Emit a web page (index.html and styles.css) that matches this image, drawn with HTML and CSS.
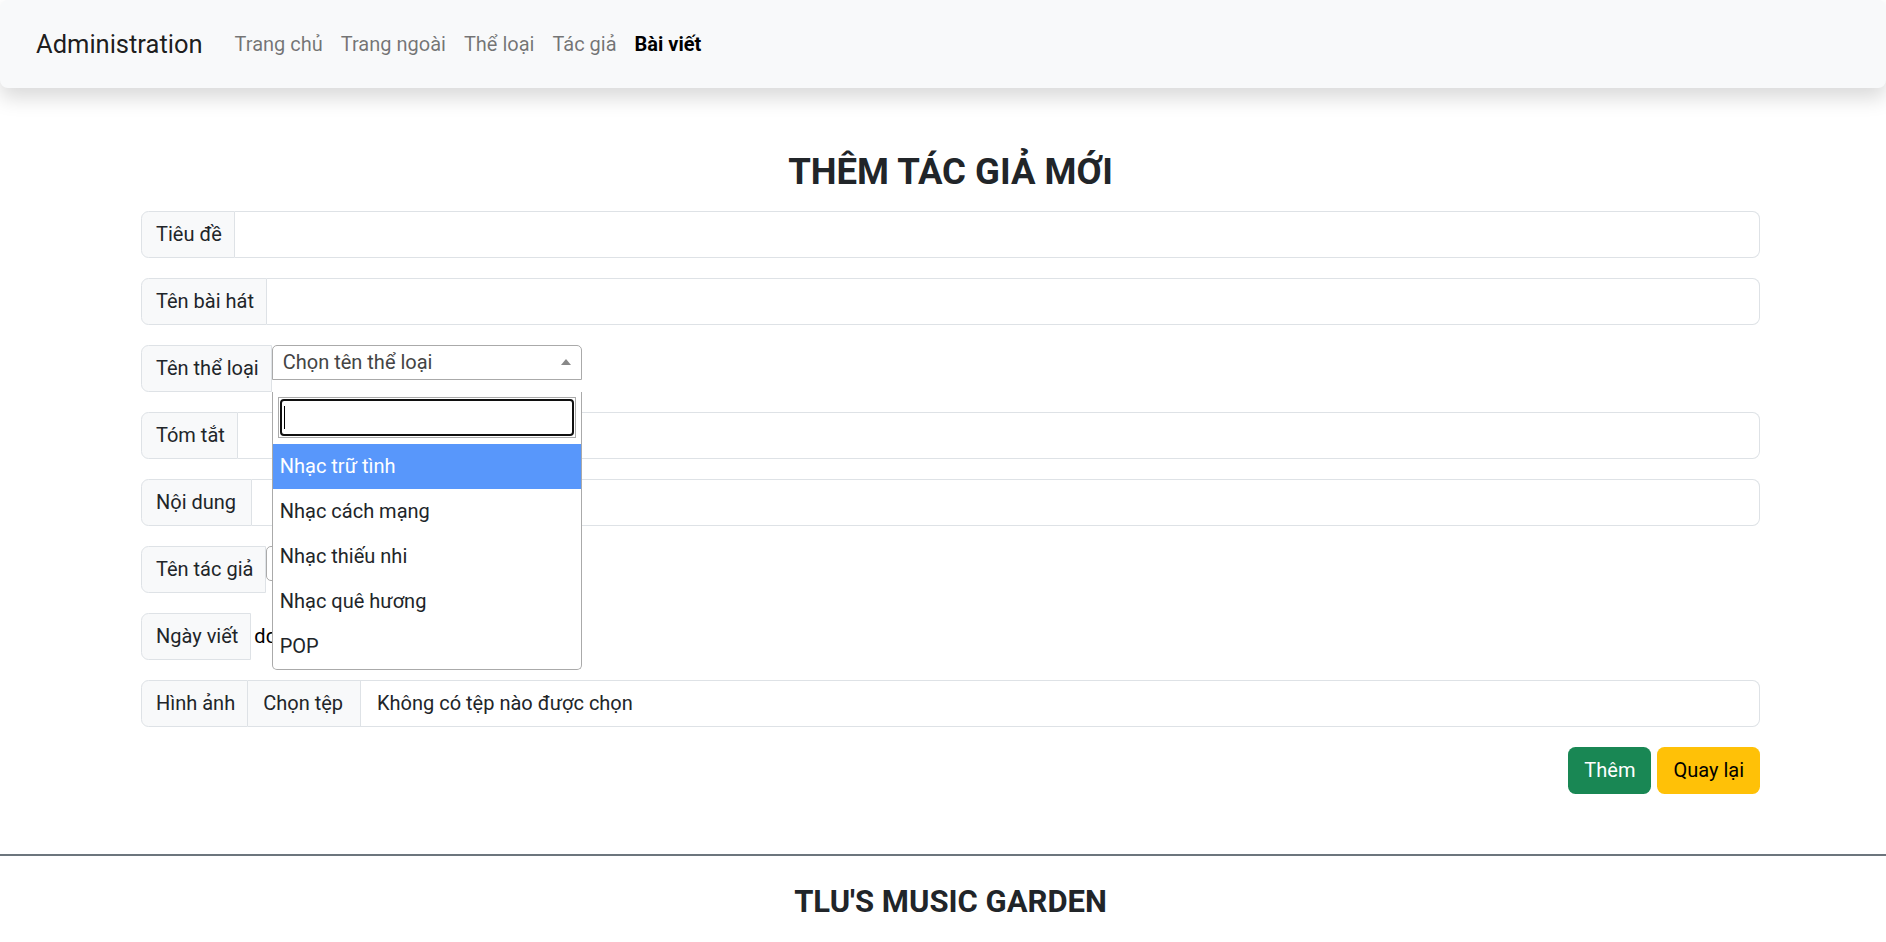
FILE: index.html
```html
<!DOCTYPE html>
<html lang="vi">
<head>
<meta charset="utf-8">
<title>Administration</title>
<link rel="stylesheet" href="styles.css">
</head>
<body>
<nav class="navbar">
  <a class="brand" href="#">Administration</a>
  <ul class="nav">
    <li><a href="#">Trang chủ</a></li>
    <li><a href="#">Trang ngoài</a></li>
    <li><a href="#">Thể loại</a></li>
    <li><a href="#">Tác giả</a></li>
    <li><a class="active" href="#">Bài viết</a></li>
  </ul>
</nav>

<main class="container">
  <h3 class="page-title">THÊM TÁC GIẢ MỚI</h3>
  <form class="form">
    <div class="field">
      <span class="addon">Tiêu đề</span>
      <span class="control"></span>
    </div>
    <div class="field">
      <span class="addon">Tên bài hát</span>
      <span class="control"></span>
    </div>
    <div class="field">
      <span class="addon">Tên thể loại</span>
      <span class="s2">
        <span class="s2-sel">
          <span class="s2-text">Chọn tên thể loại</span>
          <span class="s2-arrow"></span>
        </span>
        <span class="s2-drop">
          <span class="s2-search">
            <span class="s2-field"><span class="s2-ring"><span class="caret"></span></span></span>
          </span>
          <span class="s2-opt hl">Nhạc trữ tình</span>
          <span class="s2-opt">Nhạc cách mạng</span>
          <span class="s2-opt">Nhạc thiếu nhi</span>
          <span class="s2-opt">Nhạc quê hương</span>
          <span class="s2-opt">POP</span>
        </span>
      </span>
    </div>
    <div class="field">
      <span class="addon">Tóm tắt</span>
      <span class="control"></span>
    </div>
    <div class="field">
      <span class="addon addon-wide">Nội dung</span>
      <span class="control"></span>
    </div>
    <div class="field">
      <span class="addon">Tên tác giả</span>
      <span class="s2-small"></span>
    </div>
    <div class="field">
      <span class="addon">Ngày viết</span>
      <span class="date-text">dd/mm/yyyy</span>
    </div>
    <div class="field">
      <span class="addon">Hình ảnh</span>
      <span class="file">
        <span class="file-btn">Chọn tệp</span>
        <span class="file-name">Không có tệp nào được chọn</span>
      </span>
    </div>
    <div class="actions">
      <button type="button" class="btn btn-success">Thêm</button>
      <button type="button" class="btn btn-warning">Quay lại</button>
    </div>
  </form>
</main>

<hr class="divider">

<footer class="footer">
  <h4 class="footer-title">TLU'S MUSIC GARDEN</h4>
</footer>
</body>
</html>
```

FILE: styles.css
```css
* { box-sizing: border-box; }

body {
  margin: 0;
  font-family: Roboto, "Liberation Sans", sans-serif;
  font-size: 20px;
  line-height: 1.5;
  color: #212529;
  background: #fff;
}

/* navbar */
.navbar {
  position: relative;
  z-index: 2;
  display: flex;
  align-items: center;
  height: 88px;
  padding: 0 36px;
  background: #f8f9fa;
  border-radius: 8px;
  box-shadow: 0 10px 20px rgba(0, 0, 0, 0.15);
}
.brand {
  font-size: 25.5px;
  color: rgba(0, 0, 0, 0.9);
  text-decoration: none;
  margin-right: 23px;
}
.nav {
  display: flex;
  list-style: none;
  margin: 0;
  padding: 0;
}
.nav a {
  display: block;
  padding: 10px 9px;
  color: rgba(0, 0, 0, 0.55);
  text-decoration: none;
}
.nav a.active {
  color: #000;
  font-weight: 700;
}

/* container */
.container {
  padding: 0 126px 0 141px;
}
.page-title {
  margin: 62px 0 17px;
  text-align: center;
  font-size: 36.5px;
  font-weight: 700;
  line-height: 1.2;
}

/* fields */
.field {
  display: flex;
  align-items: stretch;
  height: 47px;
  margin-bottom: 20px;
}
.addon {
  display: flex;
  align-items: center;
  padding: 0 12px 0 14px;
  background: #f8f9fa;
  border: 1px solid #dee2e6;
  border-radius: 7.5px 0 0 7.5px;
  white-space: nowrap;
}
.addon-wide {
  padding-right: 15px;
}
.control {
  flex: 1;
  background: #fff;
  border: 1px solid #dee2e6;
  border-left: none;
  border-radius: 0 7.5px 7.5px 0;
}

/* select2-like */
.s2 {
  position: relative;
  width: 310px;
  display: block;
}
.s2-sel {
  display: flex;
  align-items: center;
  height: 35px;
  padding: 0 10px 0 10px;
  border: 1px solid #aaa;
  border-radius: 5px 5px 0 0;
  background: #fff;
  color: #444;
}
.s2-text {
  flex: 1;
  white-space: nowrap;
}
.s2-arrow {
  width: 0;
  height: 0;
  border-style: solid;
  border-width: 0 5px 6px 5px;
  border-color: transparent transparent #888 transparent;
}
.s2-drop {
  position: absolute;
  top: 100%;
  left: 0;
  z-index: 5;
  display: block;
  width: 310px;
  background: #fff;
  border: 1px solid #aaa;
  border-top: none;
  border-radius: 0 0 5px 5px;
}
.s2-search {
  display: block;
  padding: 5px 5px 6px;
}
.s2-field {
  display: block;
  height: 41px;
  padding: 1px;
  border: 1px solid #aaa;
}
.s2-ring {
  display: flex;
  align-items: center;
  height: 100%;
  padding-left: 2px;
  border: 2px solid #101010;
  border-radius: 4px;
}
.caret {
  display: block;
  width: 1px;
  height: 23px;
  background: #000;
}
.s2-opt {
  display: block;
  padding: 7.5px 7px;
  line-height: 30px;
  color: #212529;
}
.s2-opt.hl {
  background: #5897fb;
  color: #fff;
}
.s2-small {
  align-self: flex-start;
  width: 300px;
  height: 35px;
  border: 1px solid #aaa;
  border-radius: 5px;
  background: #fff;
}

/* date */
.date-text {
  display: flex;
  align-items: center;
  padding-left: 3px;
  color: #000;
}

/* file */
.file {
  flex: 1;
  display: flex;
  border: 1px solid #dee2e6;
  border-left: none;
  border-radius: 0 7.5px 7.5px 0;
  overflow: hidden;
}
.file-btn {
  display: flex;
  align-items: center;
  padding: 0 17px 0 15px;
  background: #f8f9fa;
  border-right: 1px solid #dee2e6;
}
.file-name {
  display: flex;
  align-items: center;
  padding-left: 16px;
}

/* buttons */
.actions {
  display: flex;
  justify-content: flex-end;
  gap: 6px;
}
.btn {
  display: flex;
  align-items: center;
  height: 47px;
  padding: 0 15px;
  font-family: inherit;
  font-size: 20px;
  border: 1px solid transparent;
  border-radius: 7.5px;
}
.btn-success {
  background: #198754;
  color: #fff;
}
.btn-warning {
  background: #ffc107;
  color: #000;
}

/* footer */
.divider {
  margin: 60px 0 0;
  border: 0;
  border-top: 2px solid #6c757d;
}
.footer {
  padding: 0 126px 0 141px;
}
.footer-title {
  margin: 27px 0 0;
  text-align: center;
  font-size: 31px;
  font-weight: 700;
  line-height: 1.2;
}
```
